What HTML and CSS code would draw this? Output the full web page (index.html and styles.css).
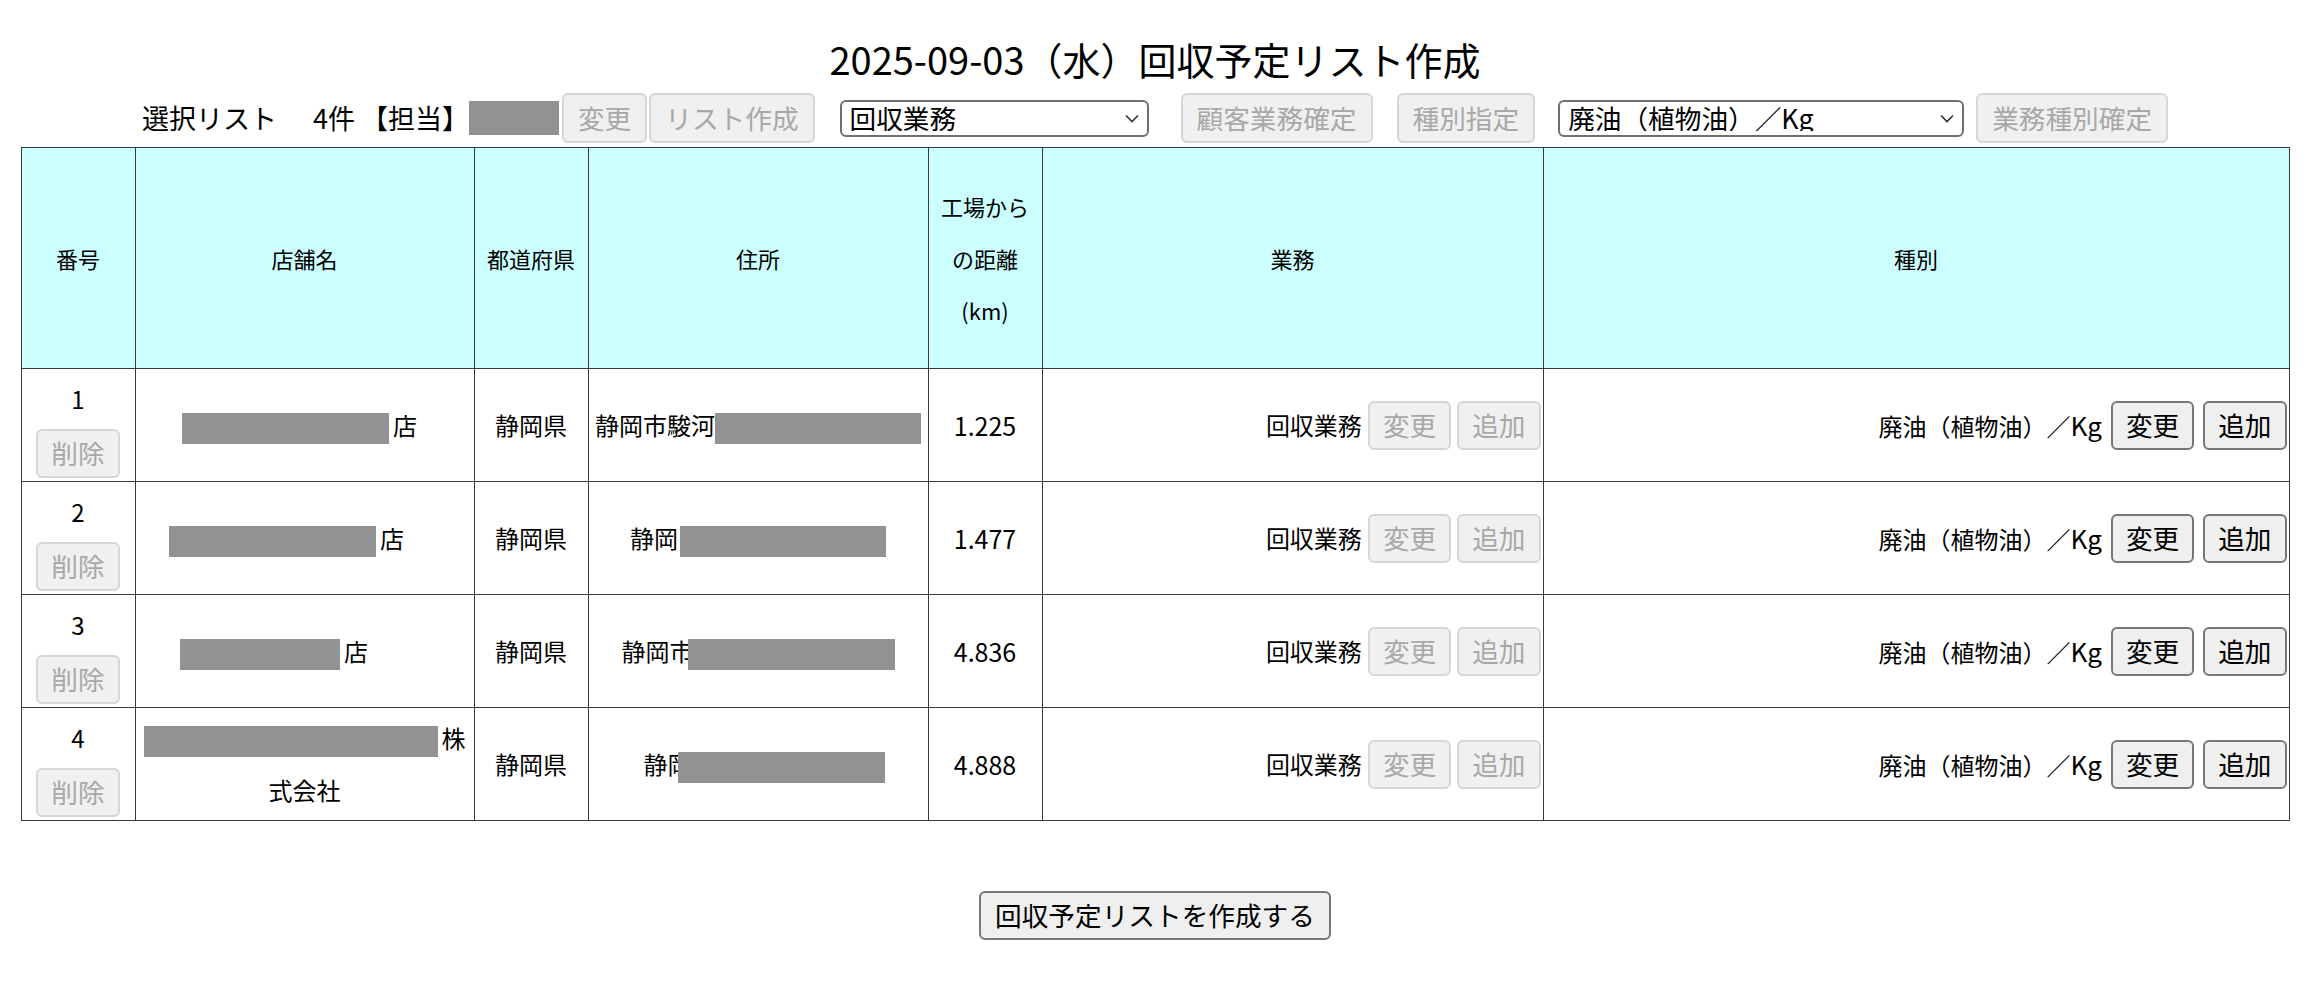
FILE: index.html
```html
<!DOCTYPE html>
<html lang="ja">
<head>
<meta charset="utf-8">
<title>回収予定リスト作成</title>
<link rel="stylesheet" href="styles.css">
</head>
<body>
<h1 class="title">2025-09-03（水）回収予定リスト作成</h1>

<div class="toolbar">
  <span class="sel-label">選択リスト<span class="gap-l">　</span>4件 【担当】</span>
  <span class="redact redact-staff"></span>
  <button class="btn btn-top m3" disabled>変更</button>
  <button class="btn btn-top m2" disabled>リスト作成</button>
  <div class="select select-job m25">
    <select><option>回収業務</option></select>
    <svg viewBox="0 0 14 9"><polyline points="1,1.5 7,7.5 13,1.5" fill="none" stroke="#333" stroke-width="1.6"/></svg>
  </div>
  <button class="btn btn-top m32" disabled>顧客業務確定</button>
  <button class="btn btn-top m24" disabled>種別指定</button>
  <div class="select select-kind m23">
    <select><option>廃油（植物油）／Kg</option></select>
    <svg viewBox="0 0 14 9"><polyline points="1,1.5 7,7.5 13,1.5" fill="none" stroke="#333" stroke-width="1.6"/></svg>
  </div>
  <button class="btn btn-top m12" disabled>業務種別確定</button>
</div>

<table class="list">
  <colgroup>
    <col class="c-num"><col class="c-name"><col class="c-pref"><col class="c-addr"><col class="c-dist"><col class="c-job"><col class="c-kind">
  </colgroup>
  <thead>
    <tr>
      <th>番号</th>
      <th>店舗名</th>
      <th>都道府県</th>
      <th>住所</th>
      <th>工場から<br>の距離<br>(km)</th>
      <th>業務</th>
      <th>種別</th>
    </tr>
  </thead>
  <tbody>
    <tr>
      <td><div class="num">1</div><button class="btn btn-del" disabled>削除</button></td>
      <td><span class="pad-a"><span class="redact rd-207"></span><span class="after">店</span></span></td>
      <td>静岡県</td>
      <td class="addr">静岡市駿河<span class="redact rd-206"></span></td>
      <td class="dist">1.225</td>
      <td><div class="ops"><span>回収業務</span><button class="btn btn-row" disabled>変更</button><button class="btn btn-row" disabled>追加</button></div></td>
      <td><div class="ops ops-kind"><span>廃油（植物油）／<span class="unit">Kg</span></span><button class="btn btn-row">変更</button><button class="btn btn-row">追加</button></div></td>
    </tr>
    <tr>
      <td><div class="num">2</div><button class="btn btn-del" disabled>削除</button></td>
      <td><span class="pad-b"><span class="redact rd-207"></span><span class="after">店</span></span></td>
      <td>静岡県</td>
      <td class="addr">静岡<span class="redact rd-206 gap-2"></span></td>
      <td class="dist">1.477</td>
      <td><div class="ops"><span>回収業務</span><button class="btn btn-row" disabled>変更</button><button class="btn btn-row" disabled>追加</button></div></td>
      <td><div class="ops ops-kind"><span>廃油（植物油）／<span class="unit">Kg</span></span><button class="btn btn-row">変更</button><button class="btn btn-row">追加</button></div></td>
    </tr>
    <tr>
      <td><div class="num">3</div><button class="btn btn-del" disabled>削除</button></td>
      <td><span class="pad-c"><span class="redact rd-160"></span><span class="after">店</span></span></td>
      <td>静岡県</td>
      <td class="addr">静岡市<span class="redact rd-207 over-6"></span></td>
      <td class="dist">4.836</td>
      <td><div class="ops"><span>回収業務</span><button class="btn btn-row" disabled>変更</button><button class="btn btn-row" disabled>追加</button></div></td>
      <td><div class="ops ops-kind"><span>廃油（植物油）／<span class="unit">Kg</span></span><button class="btn btn-row">変更</button><button class="btn btn-row">追加</button></div></td>
    </tr>
    <tr>
      <td><div class="num">4</div><button class="btn btn-del" disabled>削除</button></td>
      <td><span class="redact rd-294"></span><span class="after">株</span><br>式会社</td>
      <td>静岡県</td>
      <td class="addr"><span class="pad-d">静岡<span class="redact rd-207 over-14"></span></span></td>
      <td class="dist">4.888</td>
      <td><div class="ops"><span>回収業務</span><button class="btn btn-row" disabled>変更</button><button class="btn btn-row" disabled>追加</button></div></td>
      <td><div class="ops ops-kind"><span>廃油（植物油）／<span class="unit">Kg</span></span><button class="btn btn-row">変更</button><button class="btn btn-row">追加</button></div></td>
    </tr>
  </tbody>
</table>

<div class="actions">
  <button class="btn btn-create">回収予定リストを作成する</button>
</div>
</body>
</html>
```

FILE: styles.css
```css
* {
  box-sizing: border-box;
}

body {
  margin: 0;
  padding-right: 6px;
  font-family: "Noto Sans CJK JP", "Noto Sans", sans-serif;
  color: #000;
  background: #fff;
}

.title {
  margin: 0;
  padding-top: 35px;
  font-size: 38px;
  font-weight: normal;
  line-height: 48px;
  text-align: center;
}

/* ---------- toolbar ---------- */
.toolbar {
  display: flex;
  align-items: center;
  justify-content: center;
  height: 50px;
  margin-top: 10px;
}

.sel-label {
  font-size: 27px;
  line-height: 50px;
  white-space: pre;
}

.gap-l {
  margin-right: 9px;
}

.m2 { margin-left: 2px; }
.m3 { margin-left: 3px; }
.m12 { margin-left: 12px; }
.m23 { margin-left: 23px; }
.m24 { margin-left: 24px; }
.m25 { margin-left: 25px; }
.m32 { margin-left: 32px; }

.redact {
  display: inline-block;
  background: #929292;
  vertical-align: middle;
  height: 31px;
}

.redact-staff {
  width: 90px;
  height: 34px;
}

/* ---------- buttons ---------- */
.btn {
  font-family: inherit;
  font-size: 26.67px;
  line-height: 1;
  height: 49px;
  padding: 0 13px;
  border: 2px solid #777;
  border-radius: 6px;
  background: #efefef;
  color: #000;
  white-space: nowrap;
}

.btn:disabled {
  border-color: #d6d6d6;
  background: #f0f0f0;
  color: #a8a8a8;
}

.btn-top {
  height: 50px;
  padding: 0 14px;
}

/* ---------- selects ---------- */
.select {
  position: relative;
  height: 37px;
}

.select-job { width: 309px; }
.select-kind { width: 406px; }

.select select {
  appearance: none;
  -webkit-appearance: none;
  display: block;
  width: 100%;
  height: 100%;
  margin: 0;
  padding: 0 30px 0 8px;
  font-family: inherit;
  font-size: 26.67px;
  line-height: 1;
  color: #000;
  background: #fff;
  border: 2px solid #6f6f6f;
  border-radius: 6px;
}

.select svg {
  position: absolute;
  right: 10px;
  top: 14px;
  width: 14px;
  height: 9px;
  pointer-events: none;
}

/* ---------- table ---------- */
.list {
  width: 2268px;
  margin: 4px auto 0;
  border-collapse: collapse;
  table-layout: fixed;
}

.c-num { width: 114px; }
.c-name { width: 339px; }
.c-pref { width: 114px; }
.c-addr { width: 340px; }
.c-dist { width: 114px; }
.c-job { width: 501px; }
.c-kind { width: 746px; }

.list th,
.list td {
  border: 1px solid #3a3a3a;
  padding: 0 2px;
  text-align: center;
  vertical-align: middle;
  white-space: nowrap;
}

.list th {
  height: 221px;
  background: #ccffff;
  font-size: 22px;
  font-weight: normal;
  line-height: 52px;
}

.list td {
  height: 113px;
  font-size: 24px;
  line-height: 52px;
}

.list td.addr {
  padding: 0;
}

.list td.dist {
  font-size: 25px;
}

.unit {
  font-size: 26px;
}

.num {
  line-height: 52px;
}

.btn-del {
  display: block;
  margin: 4px auto 0;
  padding: 0 13px;
}

.after {
  margin-left: 4px;
}

.pad-a { padding-right: 10px; }
.pad-b { padding-right: 36px; }
.pad-c { padding-right: 61px; }
.pad-d { padding-left: 12px; }

.rd-160 { width: 160px; }
.rd-206 { width: 206px; }
.rd-207 { width: 207px; }
.rd-294 { width: 294px; }

.gap-2 { margin-left: 2px; }

.over-6,
.over-14 {
  position: relative;
}

.over-6 { margin-left: -6px; }
.over-14 { margin-left: -14px; }

.ops {
  display: flex;
  justify-content: flex-end;
  align-items: center;
  gap: 6px;
}

.ops-kind {
  gap: 9px;
}

/* ---------- bottom action ---------- */
.actions {
  margin-top: 70px;
  text-align: center;
}

.btn-create {
  height: 49px;
  padding: 0 14px;
}
```
